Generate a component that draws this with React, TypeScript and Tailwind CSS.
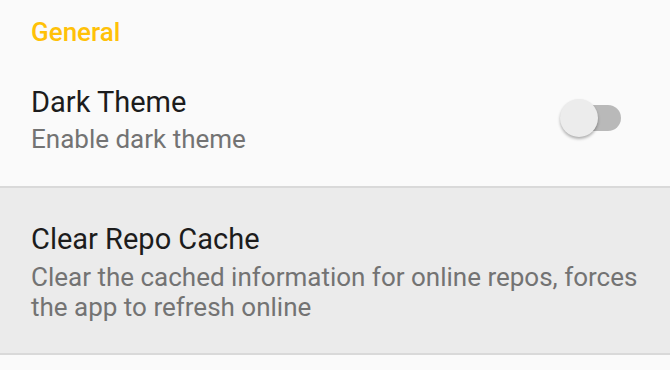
import React from "react";

const App = () => {
  return (
    <div className="w-[670px] h-[370px] overflow-hidden bg-[#fafafa] font-['Roboto',sans-serif]">
      <div className="px-[31px] pt-[17px]">
        <div className="text-[26px] font-medium text-[#ffc107] leading-[30px]">General</div>
      </div>
      <div className="h-[139px] px-[31px] pt-[37px] flex items-start justify-between">
        <div className="flex flex-col">
          <span className="text-[29px] leading-[36px] text-[#1c1c1c]">Dark Theme</span>
          <span className="mt-[2px] text-[26px] leading-[34px] text-[#737373]">Enable dark theme</span>
        </div>
        <div className="relative mt-[15px] mr-[18px] w-[61px] h-[38px] flex items-center">
          <div className="ml-[21px] w-[40px] h-[26px] rounded-full bg-[#b9b9b9]" />
          <div className="absolute left-0 top-0 w-[38px] h-[38px] rounded-full bg-[#ececec] shadow-[0_2px_3px_rgba(0,0,0,0.3)]" />
        </div>
      </div>
      <div className="h-[169px] bg-[#ebebeb] border-y-2 border-[#d9d9d9] px-[31px] pt-[33px]">
        <div className="text-[29px] leading-[36px] text-[#1c1c1c]">Clear Repo Cache</div>
        <div className="mt-[5px] text-[26px] leading-[30px] text-[#737373]">
          Clear the cached information for online repos, forces
          <br />
          the app to refresh online
        </div>
      </div>
    </div>
  );
};

export default App;
